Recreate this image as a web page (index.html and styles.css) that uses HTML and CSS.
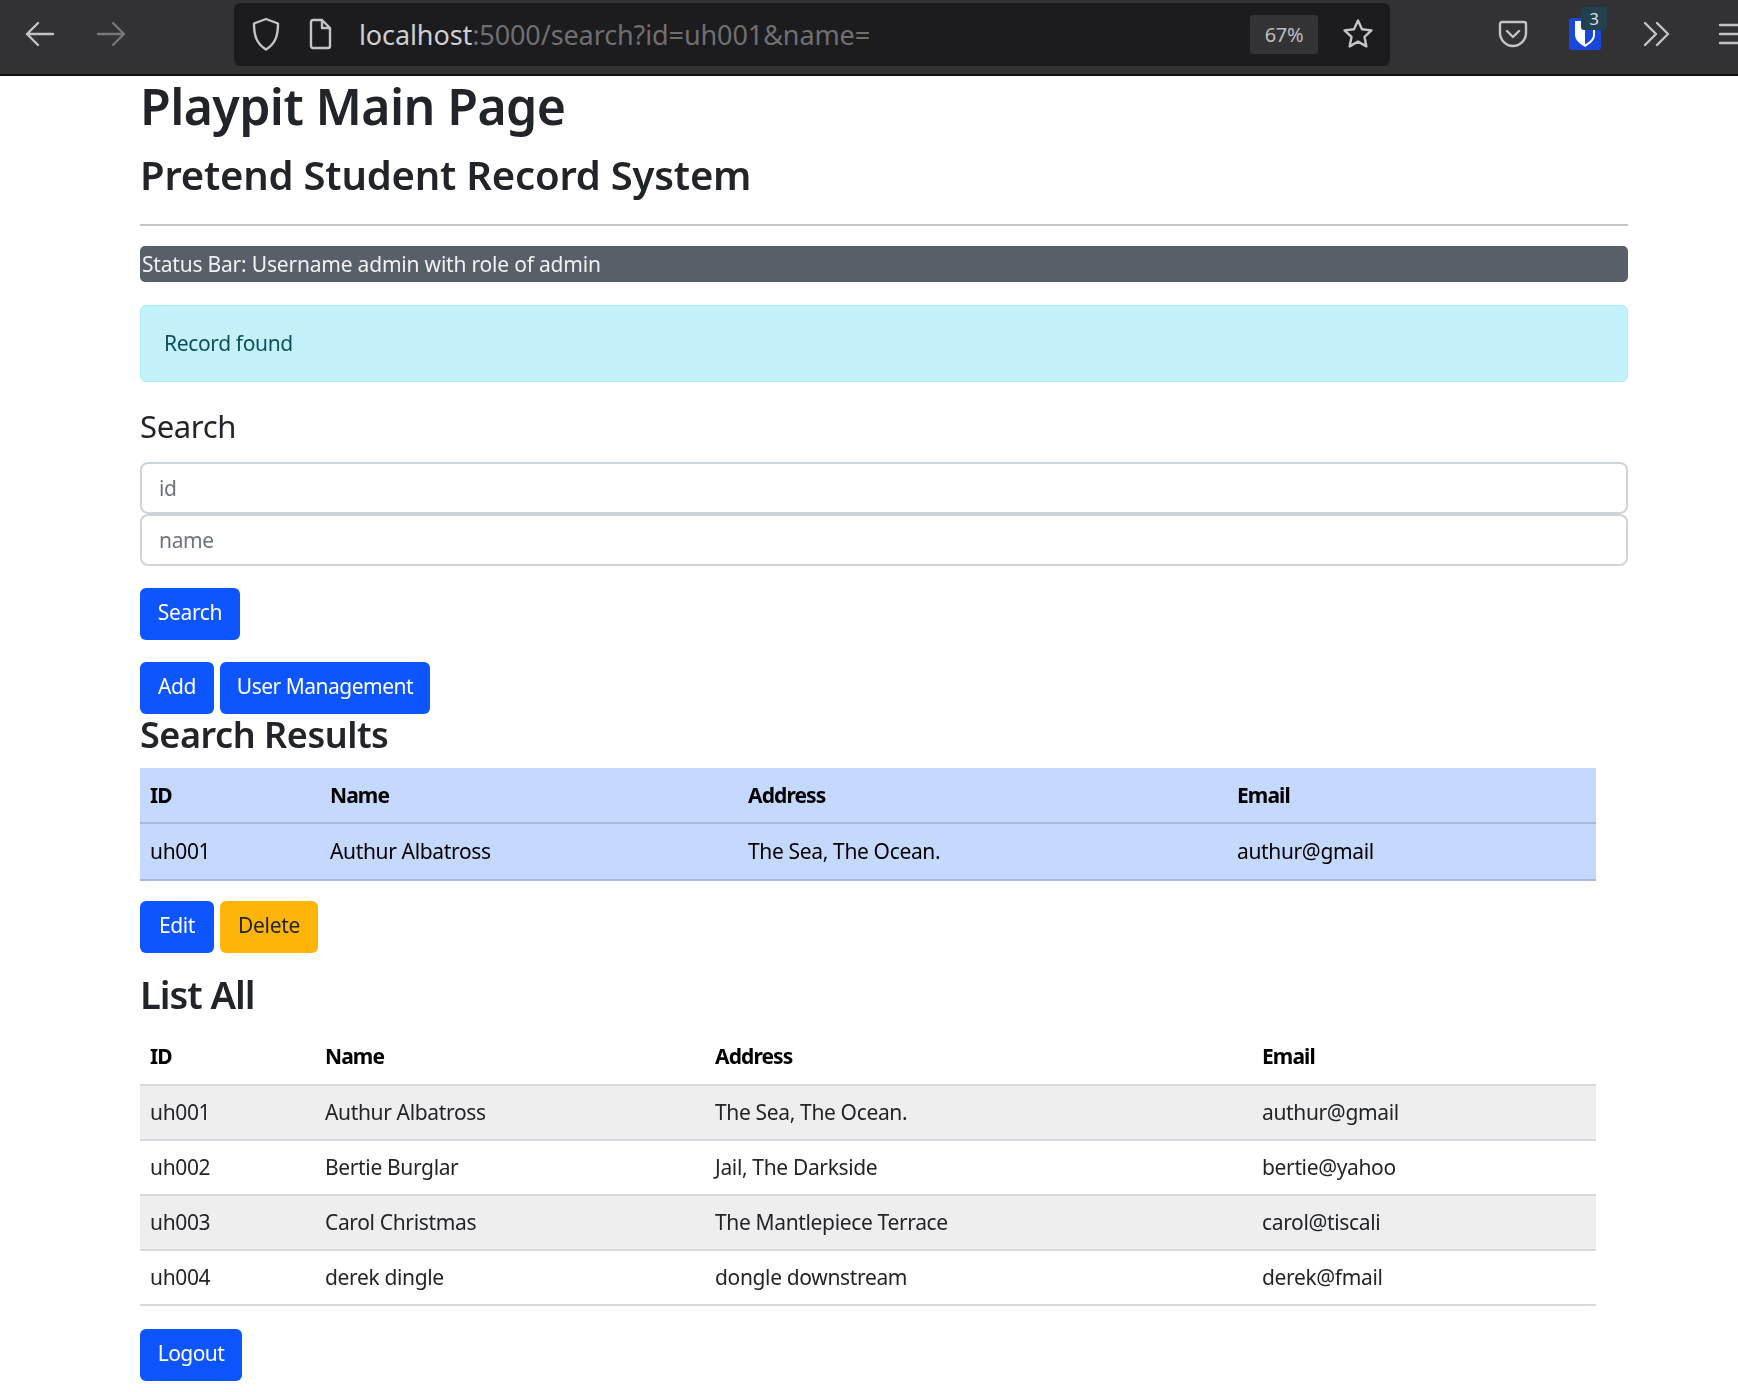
FILE: index.html
```html
<!DOCTYPE html>
<html lang="en">
<head>
    <meta charset="UTF-8">
    <title>Playpit Main Page</title>
    <link rel="stylesheet" href="styles.css">
</head>
<body>
    <div class="toolbar">
        <svg class="nav-icon" width="36" height="36" viewBox="0 0 36 36"><path d="M31 18H6M16 7 5 18l11 11"/></svg>
        <svg class="nav-icon dim" width="36" height="36" viewBox="0 0 36 36"><path d="M5 18h25M20 7l11 11-11 11"/></svg>
        <div class="urlbar">
            <svg class="nav-icon" width="32" height="36" viewBox="0 0 32 36"><path d="M16 3 4 7.5c0 11 2 20 12 26 10-6 12-15 12-26z"/></svg>
            <svg class="nav-icon page-icon" width="28" height="36" viewBox="0 0 28 36"><path d="M5 6a2 2 0 0 1 2-2h9l8 8v18a2 2 0 0 1-2 2H7a2 2 0 0 1-2-2zM16 4v8h8"/></svg>
            <div class="url"><span class="url-host">localhost</span>:5000/search?id=uh001&amp;name=</div>
            <div class="zoom-chip">67%</div>
            <svg class="nav-icon" width="34" height="34" viewBox="0 0 34 34"><path d="M17 3.500l4 8.800 9.500 1.100-7 6.500 1.900 9.500-8.400-4.800-8.400 4.800 1.900-9.500-7-6.500 9.500-1.100z"/></svg>
        </div>
        <div class="toolbar-right">
            <svg class="nav-icon" width="32" height="32" viewBox="0 0 32 32"><path d="M5 4h22a2 2 0 0 1 2 2v9c0 7-6 13-13 13S3 22 3 15V6a2 2 0 0 1 2-2zM10 13l6 6 6-6"/></svg>
            <div class="bitwarden">
                <svg width="32" height="32" viewBox="0 0 32 32"><rect width="32" height="32" rx="3" fill="#1a47db"/><path d="M6 3h20v14c0 5-5 9-10 12-5-3-10-7-10-12z" fill="#fff"/><path d="M16 5h8v12c0 4-4 7-8 9.500z" fill="#1a47db"/></svg>
                <span class="badge">3</span>
            </div>
            <svg class="nav-icon" width="32" height="32" viewBox="0 0 32 32"><path d="M4 5l11 11L4 27M16 5l11 11-11 11"/></svg>
            <svg class="nav-icon menu-icon" width="36" height="32" viewBox="0 0 36 32"><path d="M2 7h34M2 16h34M2 25h34"/></svg>
        </div>
    </div>

    <div class="container">
        <h1>Playpit Main Page</h1>
        <h2 class="subtitle">Pretend Student Record System</h2>
        <hr>
        <div class="status-bar">Status Bar: Username admin with role of admin</div>
        <div class="alert">Record found</div>

        <h4>Search</h4>
        <input class="field" type="text" placeholder="id">
        <input class="field" type="text" placeholder="name">
        <div class="btn-row"><button class="btn btn-search">Search</button></div>
        <div class="btn-row"><button class="btn btn-add">Add</button><button class="btn btn-users">User Management</button></div>

        <h3 class="results-title">Search Results</h3>
        <table class="results">
            <colgroup><col class="r1"><col class="r2"><col class="r3"><col class="r4"></colgroup>
            <thead><tr><th>ID</th><th>Name</th><th>Address</th><th>Email</th></tr></thead>
            <tbody><tr><td>uh001</td><td>Authur Albatross</td><td>The Sea, The Ocean.</td><td>authur@gmail</td></tr></tbody>
        </table>
        <div class="btn-row edit-row"><button class="btn btn-add">Edit</button><button class="btn btn-warning">Delete</button></div>

        <h2 class="list-title">List All</h2>
        <table class="list">
            <colgroup><col class="l1"><col class="l2"><col class="l3"><col class="l4"></colgroup>
            <thead><tr><th>ID</th><th>Name</th><th>Address</th><th>Email</th></tr></thead>
            <tbody>
                <tr><td>uh001</td><td>Authur Albatross</td><td>The Sea, The Ocean.</td><td>authur@gmail</td></tr>
                <tr><td>uh002</td><td>Bertie Burglar</td><td>Jail, The Darkside</td><td>bertie@yahoo</td></tr>
                <tr><td>uh003</td><td>Carol Christmas</td><td>The Mantlepiece Terrace</td><td>carol@tiscali</td></tr>
                <tr><td>uh004</td><td>derek dingle</td><td>dongle downstream</td><td>derek@fmail</td></tr>
            </tbody>
        </table>
        <div class="btn-row logout-row"><button class="btn btn-logout">Logout</button></div>
    </div>
</body>
</html>
```

FILE: styles.css
```css
* {
    box-sizing: border-box;
}

body {
    margin: 0;
    background-color: #fff;
    color: #212529;
    font-family: "Noto Sans", sans-serif;
    font-size: 21px;
    line-height: 33px;
    letter-spacing: -0.35px;
    overflow: hidden;
    height: 1392px;
    filter: blur(0.4px);
}

/* browser chrome */
.toolbar {
    display: flex;
    align-items: center;
    height: 76px;
    padding: 0 0 6px 22px;
    background-color: #323234;
    border-bottom: 2px solid #111;
}

.nav-icon {
    flex: none;
    fill: none;
    stroke: #c4c4c6;
    stroke-width: 2.4;
    stroke-linejoin: round;
    stroke-linecap: round;
}

.nav-icon.dim {
    margin-left: 35px;
    stroke: #77777a;
}

.urlbar {
    flex: none;
    display: flex;
    align-items: center;
    width: 1156px;
    height: 63px;
    margin-left: 105px;
    padding: 0 15px 0 16px;
    background-color: #1c1c1e;
    border-radius: 6px;
}

.page-icon {
    margin-left: 24px;
}

.url {
    flex: 1;
    margin-left: 25px;
    color: #6f6f72;
    font-size: 27px;
    letter-spacing: -0.1px;
    white-space: nowrap;
}

.url-host {
    color: #cfcfd1;
}

.zoom-chip {
    width: 68px;
    height: 39px;
    margin-right: 23px;
    background-color: #333336;
    border-radius: 4px;
    color: #bdbdbf;
    font-size: 20px;
    line-height: 39px;
    text-align: center;
}

.toolbar-right {
    flex: none;
    display: flex;
    align-items: center;
    gap: 40px;
    margin-left: 107px;
}

.bitwarden {
    position: relative;
    width: 32px;
    height: 32px;
}

.bitwarden svg {
    display: block;
}

.badge {
    position: absolute;
    top: -11px;
    left: 12px;
    width: 26px;
    height: 23px;
    background-color: #23404f;
    border-radius: 3px;
    color: #d8dfe3;
    font-size: 17px;
    line-height: 23px;
    text-align: center;
}

.menu-icon {
    margin-left: 5px;
}

/* page */
.container {
    display: flex;
    flex-direction: column;
    width: 1488px;
    margin-left: 140px;
}

h1, h2, h3, h4 {
    margin: 0;
    font-weight: 600;
}

h1 {
    font-size: 50px;
    line-height: 60px;
    letter-spacing: -0.6px;
}

.subtitle {
    margin-top: 13px;
    font-size: 40px;
    line-height: 52px;
    letter-spacing: -0.2px;
}

hr {
    width: 100%;
    height: 2px;
    margin: 23px 0 20px;
    border: none;
    background-color: #c5c6c7;
}

.status-bar {
    height: 36px;
    padding-left: 2px;
    background-color: #585f69;
    border-radius: 5px;
    color: #f1f1f2;
    line-height: 36px;
    letter-spacing: -0.2px;
}

.alert {
    height: 77px;
    margin-top: 23px;
    padding-left: 23px;
    background-color: #c5f1fb;
    border: 1px solid #a8ebf9;
    border-radius: 6px;
    color: #0d5060;
    line-height: 74px;
}

h4 {
    margin-top: 24px;
    font-size: 31px;
    font-weight: 400;
    line-height: 40px;
}

.field {
    display: block;
    width: 100%;
    height: 52px;
    padding: 0 17px;
    background-color: #fff;
    border: 2px solid #ced4da;
    border-radius: 8px;
    color: #212529;
    font: inherit;
    letter-spacing: inherit;
}

h4 + .field {
    margin-top: 16px;
}

.field::placeholder {
    color: #6c757d;
    opacity: 1;
}

.btn-row {
    display: flex;
    gap: 6px;
    margin-top: 22px;
}

.btn {
    height: 52px;
    padding: 0 0 3px;
    background-color: #0d55ff;
    border: none;
    border-radius: 6px;
    color: #fff;
    font: inherit;
    letter-spacing: inherit;
}

.btn-search { width: 100px; }
.btn-add { width: 74px; }
.btn-users { width: 210px; letter-spacing: -0.5px; }
.btn-logout { width: 102px; letter-spacing: -0.6px; }

.btn-warning {
    width: 98px;
    background-color: #ffb40a;
    color: #212529;
}

.results-title {
    height: 54px;
    font-size: 36px;
    line-height: 42px;
    letter-spacing: -0.45px;
}

table {
    width: 1456px;
    table-layout: fixed;
    border-collapse: collapse;
}

th, td {
    height: 56px;
    padding: 0 10px;
    border-bottom: 2px solid #d6d9dd;
    text-align: left;
    white-space: nowrap;
}

th {
    font-weight: 700;
    color: #000;
    letter-spacing: -0.9px;
}

.results th, .results td {
    background-color: #c5d8fd;
    border-bottom-color: #a9bbda;
    color: #000;
}

.results th {
    height: 55px;
}

.results td {
    height: 57px;
}

.r1 { width: 180px; }
.r2 { width: 418px; }
.r3 { width: 489px; }
.r4 { width: 369px; }

.l1 { width: 175px; }
.l2 { width: 390px; }
.l3 { width: 547px; }
.l4 { width: 344px; }

.list td {
    height: 55px;
}

.list tbody tr:nth-child(odd) td {
    background-color: #eee;
}

.edit-row {
    margin-top: 20px;
}

.list-title {
    margin-top: 18px;
    font-size: 38px;
    line-height: 46px;
    letter-spacing: -1px;
}

.list {
    margin-top: 12px;
}

.logout-row {
    margin-top: 23px;
}
```
